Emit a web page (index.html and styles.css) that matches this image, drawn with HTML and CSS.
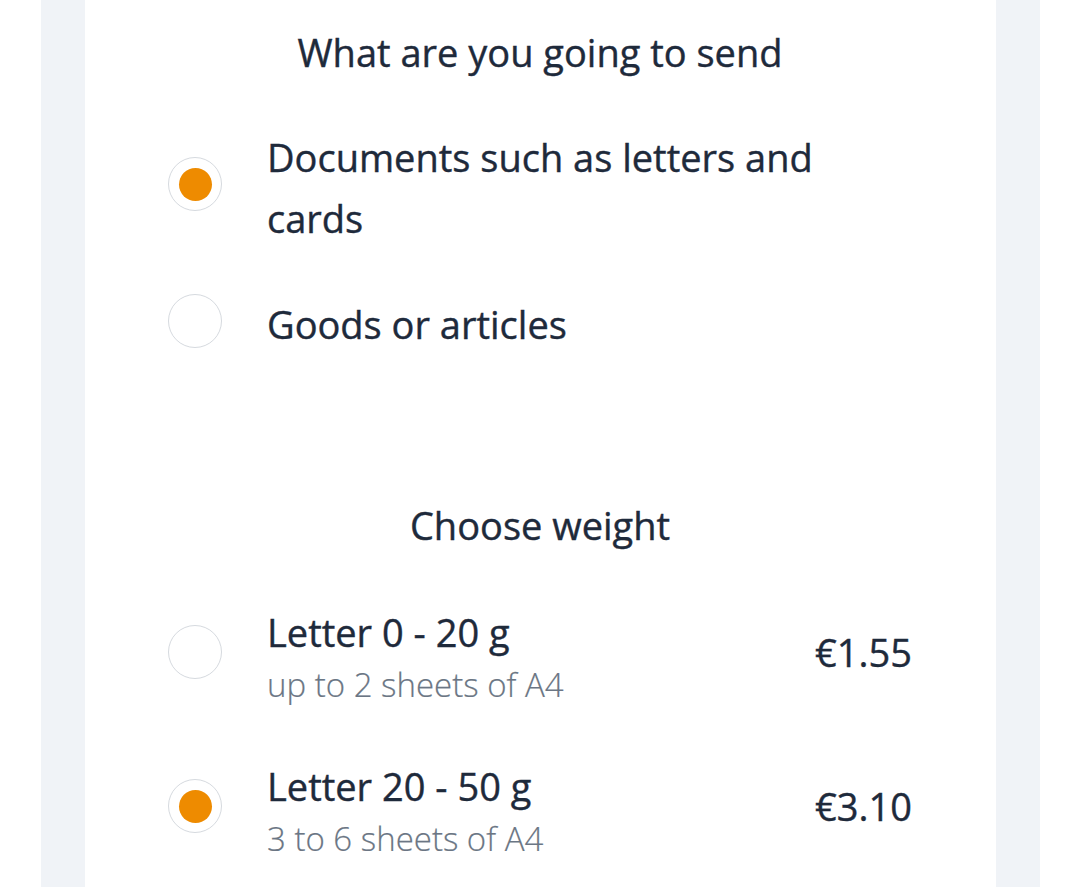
FILE: index.html
```html
<!DOCTYPE html>
<html>
<head>
  <title>Send a letter</title>
  <link rel="stylesheet" href="styles.css">
</head>
<body>
  <div class="page">
    <div class="card">
      <h2 class="section-title">What are you going to send</h2>
      <div class="options">
        <label class="option">
          <span class="radio checked"></span>
          <span class="option-text">Documents such as letters and cards</span>
        </label>
        <label class="option">
          <span class="radio"></span>
          <span class="option-text">Goods or articles</span>
        </label>
      </div>

      <h2 class="section-title weight-title">Choose weight</h2>
      <div class="options weights">
        <label class="option weight">
          <span class="radio"></span>
          <span class="weight-info">
            <span class="option-text">Letter 0 - 20 g</span>
            <span class="option-sub">up to 2 sheets of A4</span>
          </span>
          <span class="price">€1.55</span>
        </label>
        <label class="option weight">
          <span class="radio checked"></span>
          <span class="weight-info">
            <span class="option-text">Letter 20 - 50 g</span>
            <span class="option-sub">3 to 6 sheets of A4</span>
          </span>
          <span class="price">€3.10</span>
        </label>
      </div>
    </div>
  </div>
</body>
</html>
```

FILE: styles.css
```css
body {
  margin: 0;
  background-color: #fff;
  font-family: "Open Sans", Arial, sans-serif;
  color: #1e2a3b; /* dark navy text */
}

/* grey strips on both sides of the card */
.page {
  margin: 0 40px 0 41px;
  padding: 0 44px;
  background-color: #f0f3f7;
  height: 887px;
  overflow: hidden;
  display: flex;
  flex-direction: column;
}

.card {
  flex: 1;
  background-color: #fff;
  padding: 22px 84px 0 83px;
}

.section-title {
  margin: 0;
  font-size: 38px;
  font-weight: 400;
  -webkit-text-stroke: 0.4px #1e2a3b; /* a bit heavier, like the app font */
  text-align: center;
  line-height: 60px;
}

.weight-title {
  margin-top: 140px;
}

.options {
  margin-top: 37px;
}

.option {
  display: flex;
  align-items: center;
  margin-bottom: 37px;
}

.option-text {
  font-size: 38px;
  -webkit-text-stroke: 0.4px #1e2a3b;
  line-height: 61px;
  padding-top: 8px;
  max-width: 570px;
}

.radio {
  flex: none;
  width: 52px;
  height: 52px;
  border: 1.5px solid #d6dadf;
  border-radius: 50%;
  margin-right: 45px;
  position: relative;
}

.radio.checked::after {
  content: "";
  position: absolute;
  left: 9.5px;
  top: 9.5px;
  width: 33px;
  height: 33px;
  border-radius: 50%;
  background-color: #ee8b00;
}

.weights {
  margin-top: 36px;
}

.weight {
  margin-bottom: 32px;
}

.weight-info {
  display: flex;
  flex-direction: column;
  flex: 1;
  padding-top: 16px;
}

.weight .option-text {
  line-height: 50px;
  padding-top: 0;
}

.option-sub {
  font-size: 33px;
  font-weight: 300;
  -webkit-text-stroke: 0.2px #6b7684;
  color: #6b7684;
  line-height: 56px;
}

.price {
  font-size: 38px;
  -webkit-text-stroke: 0.4px #1e2a3b;
}
```
